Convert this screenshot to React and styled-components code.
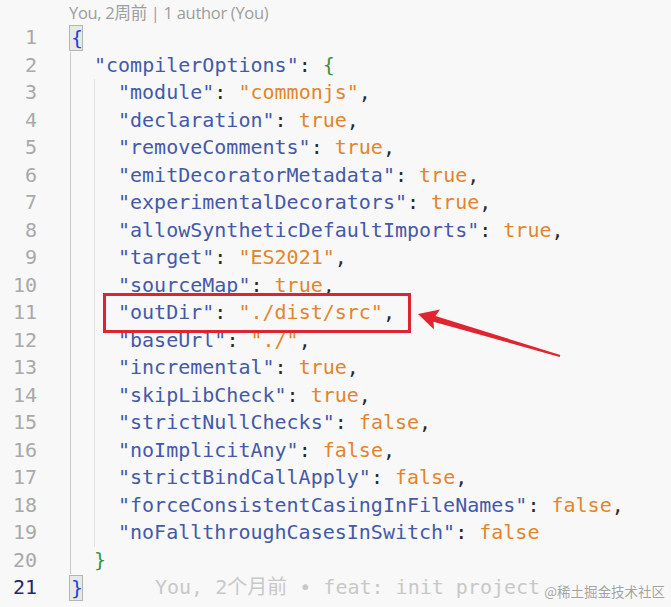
import React from "react";
import styled, { createGlobalStyle } from "styled-components";

const Global = createGlobalStyle`
  html, body { margin: 0; padding: 0; background: #f8f8f8; }
  #root { width: 671px; height: 607px; }
`;

const Editor = styled.div`
  position: relative;
  width: 671px;
  height: 607px;
  overflow: hidden;
  background: #f8f8f8;
  font-family: "DejaVu Sans Mono", "Noto Sans CJK SC", monospace;
  font-size: 20px;
`;

const CodeLens = styled.div`
  height: 23px;
  padding: 1px 0 0 69px;
  line-height: 23px;
  font-family: "Open Sans", "Noto Sans CJK SC", sans-serif;
  font-size: 16.5px;
  color: #9d9d9d;
  letter-spacing: -0.3px;
`;

const Line = styled.div`
  display: flex;
  height: 27.5px;
  line-height: 27.5px;
  white-space: pre;
`;

const Gutter = styled.div`
  width: 37px;
  margin-right: 33px;
  text-align: right;
  color: ${(p) => (p.$current ? "#1d2a6e" : "#a9a9a9")};
  flex: none;
`;

const Code = styled.div`
  display: flex;
  align-items: stretch;
`;

const Guide = styled.span`
  display: inline-block;
  width: 24px;
  height: 27.5px;
  box-sizing: border-box;
  border-left: 1px solid ${(p) => (p.$active ? "#c9c9c9" : "#e2e2e2")};
  flex: none;
`;

const colors = {
  key: "#4459aa",
  str: "#e2852c",
  punct: "#2a2a2a",
  brace1: "#1f3fd6",
  brace2: "#3a9140",
};

const Tok = styled.span`
  color: ${(p) => colors[p.$k]};
`;

const Match = styled.span`
  display: inline-block;
  box-sizing: border-box;
  height: 26px;
  margin-top: 0.75px;
  line-height: 25px;
  width: 14px;
  margin-left: -1px;
  padding-left: 1px;
  border: 1px solid #b4b4b4;
  background: #e6eae6;
  color: ${colors.brace1};
`;

const Blame = styled.span`
  margin-left: 72px;
  color: #c8c8c8;
`;

const Highlight = styled.span`
  position: relative;
  &::after {
    content: "";
    position: absolute;
    left: -15px;
    right: -16px;
    top: -6px;
    bottom: -6px;
    border: 3px solid #dc2530;
    pointer-events: none;
  }
`;

const Arrow = styled.svg`
  position: absolute;
  left: 0;
  top: 0;
  pointer-events: none;
`;

const Watermark = styled.div`
  position: absolute;
  right: 6px;
  bottom: 6px;
  font-family: "Noto Sans CJK SC", sans-serif;
  font-size: 13.5px;
  color: #a3a3a3;
  text-shadow: 0 0 2px #fff, 0 0 2px #fff;
`;

const kv = (key, value, comma = true) => [
  ["key", `"${key}"`],
  ["punct", ": "],
  ["str", value],
  ...(comma ? [["punct", ","]] : []),
];

const lines = [
  { indent: 0, match: true },
  { indent: 1, tokens: [["key", '"compilerOptions"'], ["punct", ": "], ["brace2", "{"]] },
  { indent: 2, tokens: kv("module", '"commonjs"') },
  { indent: 2, tokens: kv("declaration", "true") },
  { indent: 2, tokens: kv("removeComments", "true") },
  { indent: 2, tokens: kv("emitDecoratorMetadata", "true") },
  { indent: 2, tokens: kv("experimentalDecorators", "true") },
  { indent: 2, tokens: kv("allowSyntheticDefaultImports", "true") },
  { indent: 2, tokens: kv("target", '"ES2021"') },
  { indent: 2, tokens: kv("sourceMap", "true") },
  { indent: 2, tokens: kv("outDir", '"./dist/src"'), boxed: true },
  { indent: 2, tokens: kv("baseUrl", '"./"') },
  { indent: 2, tokens: kv("incremental", "true") },
  { indent: 2, tokens: kv("skipLibCheck", "true") },
  { indent: 2, tokens: kv("strictNullChecks", "false") },
  { indent: 2, tokens: kv("noImplicitAny", "false") },
  { indent: 2, tokens: kv("strictBindCallApply", "false") },
  { indent: 2, tokens: kv("forceConsistentCasingInFileNames", "false") },
  { indent: 2, tokens: kv("noFallthroughCasesInSwitch", "false", false) },
  { indent: 1, tokens: [["brace2", "}"]] },
  { indent: 0, match: true, close: true, current: true, blame: "You, 2个月前 • feat: init project" },
];

export default function App() {
  return (
    <>
      <Global />
      <Editor>
        <CodeLens>You, 2周前 | 1 author (You)</CodeLens>
        {lines.map((l, i) => {
          const toks = (l.tokens || []).map(([k, t], j) => (
            <Tok key={j} $k={k}>{t}</Tok>
          ));
          return (
            <Line key={i}>
              <Gutter $current={l.current}>{i + 1}</Gutter>
              <Code>
                {Array.from({ length: l.indent }).map((_, g) => (
                  <Guide key={g} $active={g === 0} />
                ))}
                {l.match ? <Match>{l.close ? "}" : "{"}</Match> : null}
                {l.boxed ? <Highlight>{toks}</Highlight> : toks}
                {l.blame ? <Blame>{l.blame}</Blame> : null}
              </Code>
            </Line>
          );
        })}
        <Arrow width="671" height="607" viewBox="0 0 671 607">
          <polygon
            points="418,314 440,309.5 435.5,316 560.3,355 559.7,357 433.5,321.7 434,329.5"
            fill="#df2530"
          />
        </Arrow>
        <Watermark>@稀土掘金技术社区</Watermark>
      </Editor>
    </>
  );
}
